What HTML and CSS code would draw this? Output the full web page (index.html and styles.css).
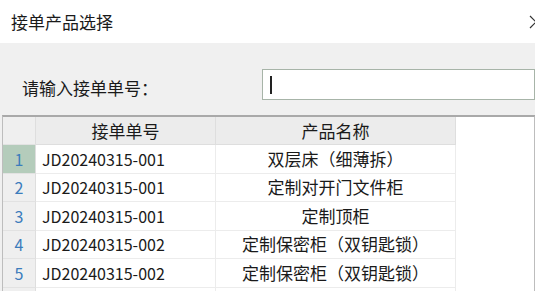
FILE: index.html
```html
<!DOCTYPE html>
<html lang="zh-CN">
<head>
    <meta charset="UTF-8">
    <title>接单产品选择</title>
    <link rel="stylesheet" href="styles.css">
</head>
<body>
    <div class="titlebar">
        <span class="title">接单产品选择</span>
        <svg class="close" width="14" height="14" viewBox="0 0 14 14">
            <path d="M1 1 L13 13 M13 1 L1 13" stroke="#333" stroke-width="1.2" fill="none"/>
        </svg>
    </div>

    <div class="search">
        <label for="orderNo">请输入接单单号：</label>
        <div class="input-box">
            <span class="caret"></span>
        </div>
    </div>

    <div class="grid">
        <table>
            <colgroup>
                <col class="c-num">
                <col class="c-no">
                <col class="c-name">
                <col>
            </colgroup>
            <thead>
                <tr class="head">
                    <th class="rownum"></th>
                    <th class="col-no">接单单号</th>
                    <th class="col-name">产品名称</th>
                    <th class="filler"></th>
                </tr>
            </thead>
            <tbody>
                <tr>
                    <td class="rownum selected">1</td>
                    <td class="col-no">JD20240315-001</td>
                    <td class="col-name">双层床（细薄拆）</td>
                    <td class="filler"></td>
                </tr>
                <tr>
                    <td class="rownum">2</td>
                    <td class="col-no">JD20240315-001</td>
                    <td class="col-name">定制对开门文件柜</td>
                    <td class="filler"></td>
                </tr>
                <tr>
                    <td class="rownum">3</td>
                    <td class="col-no">JD20240315-001</td>
                    <td class="col-name">定制顶柜</td>
                    <td class="filler"></td>
                </tr>
                <tr>
                    <td class="rownum">4</td>
                    <td class="col-no">JD20240315-002</td>
                    <td class="col-name">定制保密柜（双钥匙锁）</td>
                    <td class="filler"></td>
                </tr>
                <tr>
                    <td class="rownum">5</td>
                    <td class="col-no">JD20240315-002</td>
                    <td class="col-name">定制保密柜（双钥匙锁）</td>
                    <td class="filler"></td>
                </tr>
                <tr>
                    <td class="rownum">6</td>
                    <td class="col-no">JD20240315-003</td>
                    <td class="col-name">定制储物柜</td>
                    <td class="filler"></td>
                </tr>
            </tbody>
        </table>
    </div>
</body>
</html>
```

FILE: styles.css
```css
body {
    margin: 0;
    background: #f0f0f0;
    font-family: "Noto Sans CJK SC", "Microsoft YaHei", sans-serif;
    color: #1a1a1a;
    overflow: hidden;
    width: 535px;
    height: 291px;
}
.titlebar {
    height: 43px;
    background: #fff;
    display: flex;
    align-items: center;
    justify-content: space-between;
    padding-left: 11px;
    font-size: 17px;
    overflow: hidden;
}
.close {
    margin-right: -8px;
    flex: none;
}
.search {
    display: flex;
    align-items: center;
    padding: 26px 0 15px 22px;
}
.search label {
    width: 241px;
    font-size: 17px;
    padding-top: 5px;
}
.input-box {
    width: 265px;
    height: 29px;
    background: #fff;
    border: 1px solid #a7b4a8;
    display: flex;
    align-items: center;
    padding-left: 7px;
    box-sizing: content-box;
}
.caret {
    width: 2px;
    height: 18px;
    background: #222;
}
.grid {
    margin-left: 2px;
    width: 531px;
    border-top: 2px solid #a9a9a9;
    border-left: 1px solid #bdbdbd;
    border-right: 2px solid #bdbdbd;
    background: #fff;
    height: 200px;
}
table {
    border-collapse: separate;
    border-spacing: 0;
    table-layout: fixed;
    width: 100%;
    font-size: 17px;
    line-height: 20px;
}
.c-num {
    width: 33px;
}
.c-no {
    width: 180px;
}
.c-name {
    width: 240px;
}
tr {
    height: 28.5px;
}
tr.head {
    height: 28px;
}
th, td {
    padding: 0;
    border-right: 1px solid #ececec;
    border-bottom: 1px solid #ececec;
    white-space: nowrap;
    overflow: hidden;
}
th {
    background: #ececec;
    font-weight: normal;
    border-right-color: #dedede;
    border-bottom-color: #dedede;
}
.rownum {
    background: #efefef;
    color: #3b7cbc;
    text-align: center;
    font-size: 16px;
    border-right-color: #dedede;
    border-bottom-color: #e2e2e2;
}
.rownum.selected {
    background: #b4ccbb;
}
.col-no {
    padding-left: 6px;
    font-size: 16px;
}
th.col-no {
    padding-left: 0;
    font-size: 17px;
    text-align: center;
}
.col-name {
    text-align: center;
}
.filler {
    border: none;
    background: #fff;
}
th.filler {
    background: #fff;
}
```
